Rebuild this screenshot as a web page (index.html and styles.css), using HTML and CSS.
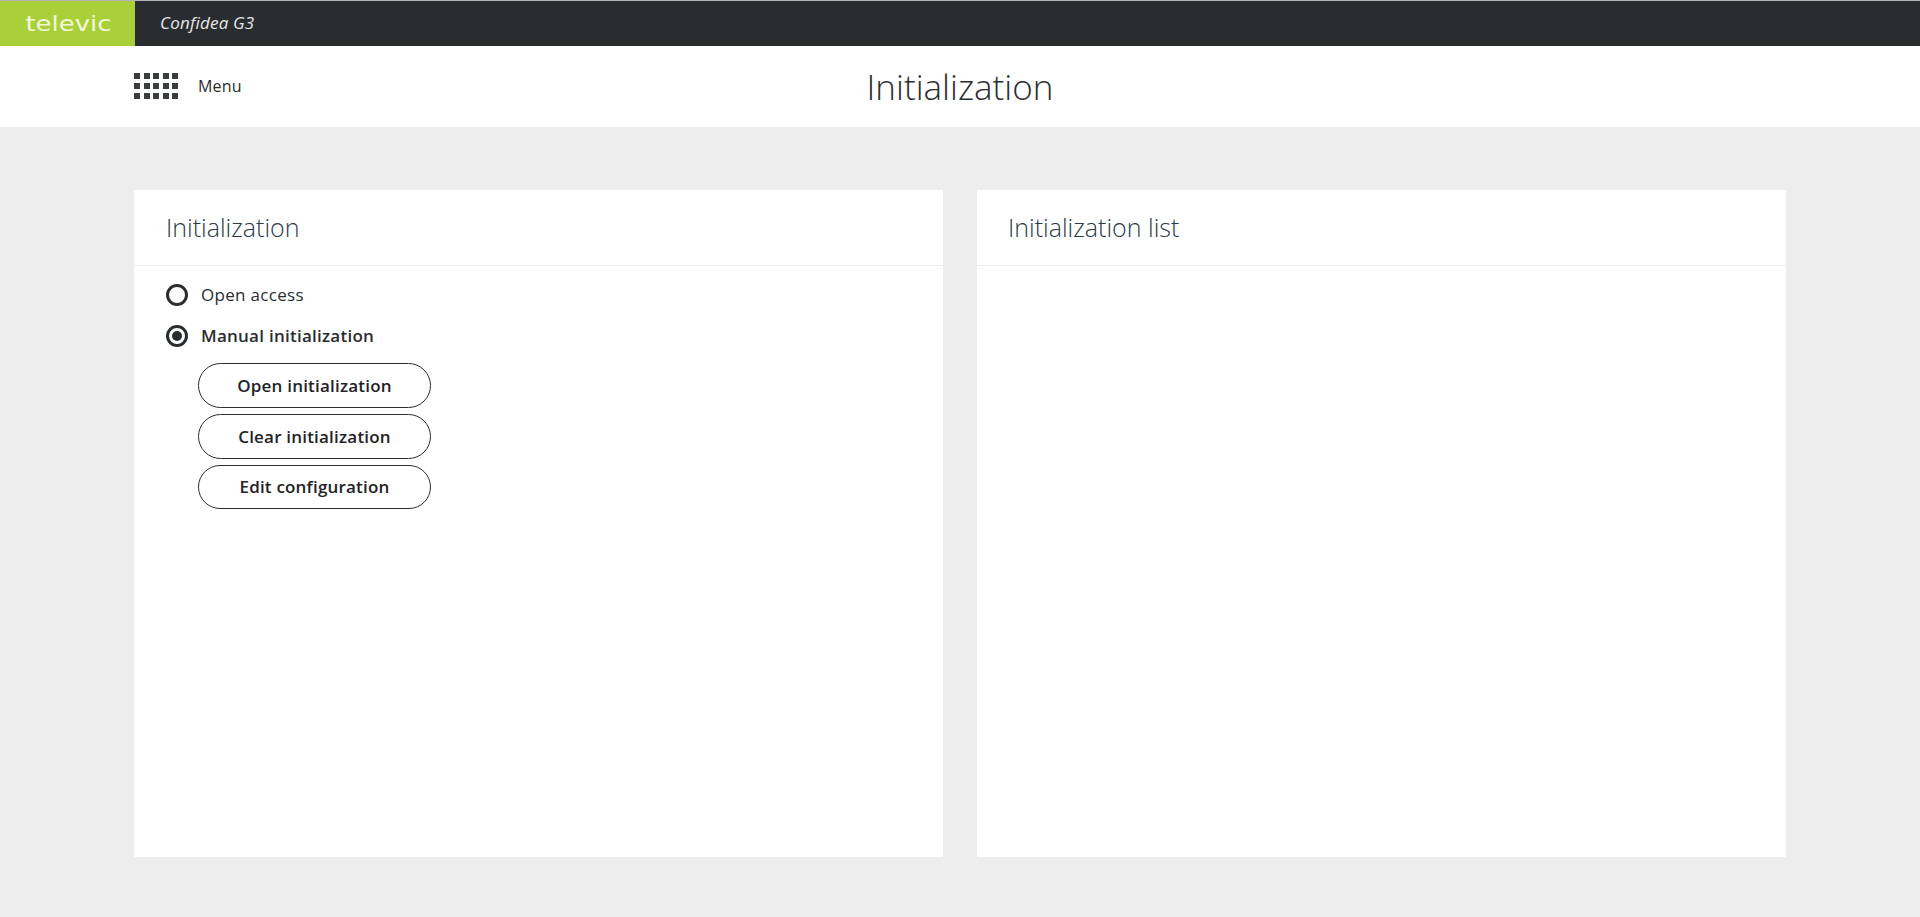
FILE: index.html
```html
<!DOCTYPE html>
<html lang="en">
<head>
<meta charset="utf-8">
<title>Initialization</title>
<link rel="stylesheet" href="styles.css">
</head>
<body>
<div class="topbar">
  <div class="logo"><span class="logo-text">televic</span></div>
  <div class="product">Confidea G3</div>
</div>
<header class="header">
  <div class="menu">
    <svg class="menu-icon" width="45" height="26" viewBox="0 0 45 26" aria-hidden="true">
      <g fill="#3a3d40">
        <rect x="0" y="0" width="6" height="6"/><rect x="10" y="0" width="6" height="6"/><rect x="19" y="0" width="6" height="6"/><rect x="29" y="0" width="6" height="6"/><rect x="38" y="0" width="6" height="6"/>
        <rect x="0" y="10" width="6" height="6"/><rect x="10" y="10" width="6" height="6"/><rect x="19" y="10" width="6" height="6"/><rect x="29" y="10" width="6" height="6"/><rect x="38" y="10" width="6" height="6"/>
        <rect x="0" y="20" width="6" height="6"/><rect x="10" y="20" width="6" height="6"/><rect x="19" y="20" width="6" height="6"/><rect x="29" y="20" width="6" height="6"/><rect x="38" y="20" width="6" height="6"/>
      </g>
    </svg>
    <span class="menu-label">Menu</span>
  </div>
  <h1 class="page-title">Initialization</h1>
</header>
<main class="content">
  <section class="card">
    <h2 class="card-title">Initialization</h2>
    <div class="card-body">
      <div class="radio-row"><span class="radio"></span><span class="radio-label">Open access</span></div>
      <div class="radio-row"><span class="radio checked"></span><span class="radio-label selected">Manual initialization</span></div>
      <div class="buttons">
        <button class="btn">Open initialization</button>
        <button class="btn">Clear initialization</button>
        <button class="btn btn-last">Edit configuration</button>
      </div>
    </div>
  </section>
  <section class="card">
    <h2 class="card-title card-title-list">Initialization list</h2>
    <div class="card-body"></div>
  </section>
</main>
</body>
</html>
```
FILE: styles.css
```css
* { box-sizing: border-box; }
html, body { margin: 0; padding: 0; height: 100%; }
body {
  background: #ededed;
  font-family: "Open Sans", "Liberation Sans", sans-serif;
  color: #2a2d30;
  overflow: hidden;
}
.topbar {
  display: flex;
  height: 46px;
  background: #2a2d30;
  border-top: 1px solid #b5b5b5;
}
.logo {
  width: 135px;
  padding-left: 2px;
  background: #a9d039;
  display: flex;
  align-items: center;
  justify-content: center;
}
.logo-text {
  font-family: "DejaVu Sans", sans-serif;
  font-size: 22px;
  line-height: 24px;
  color: #f2f7dc;
  display: inline-block;
  transform: scaleX(1.18);
}
.product {
  margin-left: 25px;
  font-style: italic;
  font-size: 17px;
  letter-spacing: 0.2px;
  line-height: 44px;
  color: #e6e6e6;
}
.header {
  height: 81px;
  background: #fff;
  display: flex;
  align-items: center;
  position: relative;
  padding-left: 134px;
}
.menu { display: flex; align-items: center; }
.menu-icon { display: block; margin-top: -1px; }
.menu-label { margin-left: 19px; font-size: 16px; letter-spacing: 0.15px; margin-top: -2px; }
.page-title {
  position: absolute;
  left: 0;
  right: 0;
  top: 18px;
  margin: 0;
  text-align: center;
  font-weight: 300;
  font-size: 35px;
  line-height: 46px;
}
.content {
  display: flex;
  gap: 34px;
  padding: 63px 134px 0;
}
.card {
  width: 809px;
  height: 667px;
  background: #fff;
}
.card-title {
  margin: 0;
  height: 76px;
  padding: 0 32px;
  border-bottom: 1px solid #ededed;
  font-weight: 300;
  font-size: 25px;
  line-height: 75px;
  color: #2a3a4a;
}
.card-title-list { padding-left: 31px; }
.card-body { padding: 17px 32px; }
.radio-row { display: flex; align-items: center; height: 24px; margin-bottom: 17px; }
.radio {
  width: 22px;
  height: 22px;
  border: 3px solid #2a2d30;
  border-radius: 50%;
  display: flex;
  align-items: center;
  justify-content: center;
}
.radio.checked::after {
  content: "";
  width: 10px;
  height: 10px;
  border-radius: 50%;
  background: #2a2d30;
}
.radio-label { margin-left: 13px; font-size: 17px; letter-spacing: 0.3px; line-height: 22px; margin-top: -1px; }
.radio-label.selected { font-weight: 600; letter-spacing: 0.25px; }
.buttons {
  display: flex;
  flex-direction: column;
  gap: 6px;
  margin: -2px 0 0 32px;
}
.btn {
  width: 233px;
  height: 45px;
  background: #fff;
  border: 1px solid #2a2d30;
  border-radius: 23px;
  font-family: inherit;
  font-weight: 600;
  font-size: 17px;
  letter-spacing: 0.2px;
  color: #1f2226;
  padding: 0 0 1px;
}
.btn-last { height: 44px; }
```
